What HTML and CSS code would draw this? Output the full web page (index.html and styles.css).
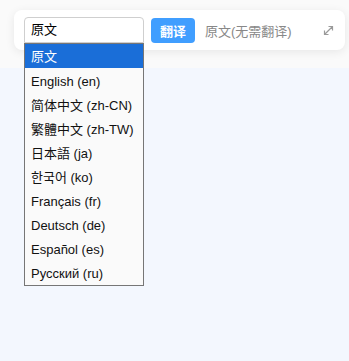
FILE: index.html
```html
<!DOCTYPE html>
<html lang="zh-CN">
<head>
    <meta charset="UTF-8">
    <meta name="viewport" content="width=device-width, initial-scale=1.0">
    <title>翻译</title>
    <link rel="stylesheet" href="styles.css">
</head>
<body>
    <div class="topbar">
        <div class="toolbar">
            <div class="lang-select">
                <div class="select-box">原文</div>
                <ul class="options">
                    <li class="selected">原文</li>
                    <li>English (en)</li>
                    <li>简体中文 (zh-CN)</li>
                    <li>繁體中文 (zh-TW)</li>
                    <li>日本語 (ja)</li>
                    <li>한국어 (ko)</li>
                    <li>Français (fr)</li>
                    <li>Deutsch (de)</li>
                    <li>Español (es)</li>
                    <li>Русский (ru)</li>
                </ul>
            </div>
            <button class="btn-translate">翻译</button>
            <span class="hint">原文(无需翻译)</span>
            <svg class="expand" width="11" height="11" viewBox="0 0 11 11">
                <path d="M1.5 9.5 L9.5 1.5 M5.5 1.5 H9.5 V5.5 M1.5 5.5 V9.5 H5.5" fill="none" stroke="#9a9a9a" stroke-width="1.2"/>
            </svg>
        </div>
    </div>
    <main class="content"></main>
</body>
</html>
```

FILE: styles.css
```css
body {
    margin: 0;
    font-family: "Liberation Sans", "Noto Sans CJK SC", sans-serif;
    font-size: 13px;
    color: #222;
    background-color: #f3f7fe;
}

.topbar {
    background-color: #fafafa;
    height: 68px;
    padding: 10px 4px 0 14px;
    box-sizing: border-box;
}

.toolbar {
    display: flex;
    align-items: center;
    height: 40px;
    padding: 0 10px;
    background-color: #fff;
    border-radius: 8px;
    box-shadow: 0 2px 10px rgba(0, 0, 0, 0.08);
}

.lang-select {
    position: relative;
    width: 120px;
}

.select-box {
    height: 26px;
    line-height: 24px;
    box-sizing: border-box;
    padding: 0 6px;
    border: 1px solid #cfcfcf;
    border-radius: 4px 4px 0 0;
    font-size: 13px;
    color: #000;
}

.options {
    position: absolute;
    top: 26px;
    left: 0;
    width: 120px;
    box-sizing: border-box;
    margin: 0;
    padding: 0 0 1px;
    list-style: none;
    background-color: #fafafa;
    border: 1px solid #767676;
    z-index: 2;
}

.options li {
    height: 24px;
    line-height: 27px;
    padding: 0 6px;
    color: #111;
    white-space: nowrap;
}

.options li.selected {
    line-height: 25px;
    background-color: #1a6ed8;
    color: #fff;
}

.btn-translate {
    margin-left: 7px;
    width: 44px;
    height: 25px;
    border: none;
    border-radius: 4px;
    background-color: #409eff;
    color: #fff;
    font-family: inherit;
    font-size: 13px;
    font-weight: bold;
    padding: 0;
}

.hint {
    margin-left: 10px;
    color: #888;
    flex: 1;
}

.expand {
    margin-right: 1px;
}

.content {
    height: 293px;
}
```
